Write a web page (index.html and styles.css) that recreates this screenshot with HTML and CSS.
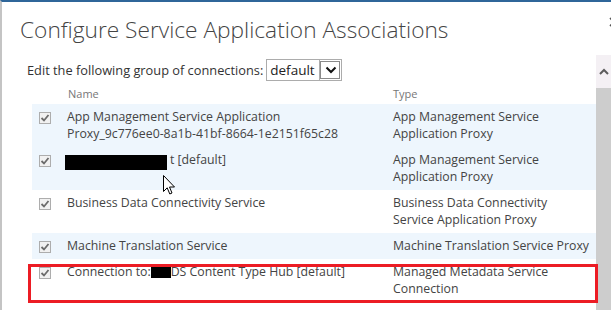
FILE: index.html
```html
<!DOCTYPE html>
<html>
<head>
<meta charset="utf-8">
<link rel="stylesheet" href="styles.css">
</head>
<body>
<div class="window">
  <div class="header">
    <h1 class="title">Configure Service Application Associations</h1>
    <svg class="close" width="10" height="10" viewBox="0 0 10 10"><path d="M1 1 L9 9 M9 1 L1 9" stroke="#555" stroke-width="1.6" fill="none"/></svg>
  </div>
  <div class="body">
    <div class="main">
      <div class="edit">
        <span class="edit-label">Edit the following group of connections:</span>
        <div class="select">
          <span class="select-value">default</span>
          <span class="select-btn"><svg width="12" height="8" viewBox="0 0 12 8"><polyline points="1.5,1.5 6,6 10.5,1.5" fill="none" stroke="#111" stroke-width="2"/></svg></span>
        </div>
      </div>
      <div class="table">
        <div class="thead">
          <span></span><span>Name</span><span>Type</span>
        </div>
        <div class="row hl">
          <span class="cb"><svg width="12" height="12" viewBox="0 0 12 12"><rect x="0.5" y="0.5" width="11" height="11" fill="#f1f1f1" stroke="#adadad"/><polyline points="2.5,6 5,8.5 9.5,3" fill="none" stroke="#6b6b6b" stroke-width="1.8"/></svg></span>
          <span class="name">App Management Service Application<br>Proxy_9c776ee0-8a1b-41bf-8664-1e2151f65c28</span>
          <span class="type">App Management Service<br>Application Proxy</span>
        </div>
        <div class="row hl">
          <span class="cb"><svg width="12" height="12" viewBox="0 0 12 12"><rect x="0.5" y="0.5" width="11" height="11" fill="#f1f1f1" stroke="#adadad"/><polyline points="2.5,6 5,8.5 9.5,3" fill="none" stroke="#6b6b6b" stroke-width="1.8"/></svg></span>
          <span class="name"><span class="redact redact-a"></span>t [default]</span>
          <span class="type">App Management Service<br>Application Proxy</span>
        </div>
        <div class="row">
          <span class="cb"><svg width="12" height="12" viewBox="0 0 12 12"><rect x="0.5" y="0.5" width="11" height="11" fill="#f1f1f1" stroke="#adadad"/><polyline points="2.5,6 5,8.5 9.5,3" fill="none" stroke="#6b6b6b" stroke-width="1.8"/></svg></span>
          <span class="name">Business Data Connectivity Service</span>
          <span class="type">Business Data Connectivity<br>Service Application Proxy</span>
        </div>
        <div class="row hl">
          <span class="cb"><svg width="12" height="12" viewBox="0 0 12 12"><rect x="0.5" y="0.5" width="11" height="11" fill="#f1f1f1" stroke="#adadad"/><polyline points="2.5,6 5,8.5 9.5,3" fill="none" stroke="#6b6b6b" stroke-width="1.8"/></svg></span>
          <span class="name">Machine Translation Service</span>
          <span class="type">Machine Translation Service Proxy</span>
        </div>
        <div class="row marked">
          <span class="cb"><svg width="12" height="12" viewBox="0 0 12 12"><rect x="0.5" y="0.5" width="11" height="11" fill="#f1f1f1" stroke="#adadad"/><polyline points="2.5,6 5,8.5 9.5,3" fill="none" stroke="#6b6b6b" stroke-width="1.8"/></svg></span>
          <span class="name">Connection to:<span class="redact redact-b"></span>DS Content Type Hub [default]</span>
          <span class="type">Managed Metadata Service<br>Connection</span>
          <span class="annot"></span>
        </div>
      </div>
    </div>
    <div class="scrollbar">
      <div class="sb-up"><svg width="10" height="7" viewBox="0 0 10 7"><polyline points="1,6 5,2 9,6" fill="none" stroke="#5c5c5c" stroke-width="2"/></svg></div>
      <div class="sb-thumb"></div>
    </div>
  </div>
  <svg class="cursor" width="13" height="21" viewBox="0 0 13 21"><path d="M0.5 0.5 L0.5 16.5 L4.2 12.8 L6.8 19 L9 18 L6.5 12 L11.5 12 Z" fill="#fff" stroke="#000" stroke-width="1" stroke-linejoin="miter"/></svg>
</div>
</body>
</html>
```

FILE: styles.css
```css
html, body {
  margin: 0;
  padding: 0;
  background: #fff;
}

.window {
  position: relative;
  width: 611px;
  height: 310px;
  box-sizing: border-box;
  overflow: hidden;
  border-top: 2px solid #2f6699;
  border-left: 2px solid #c4c4c4;
  font-family: "Open Sans", "Noto Sans", sans-serif;
  color: #444;
}

.header {
  display: flex;
  align-items: flex-start;
  padding-top: 14px;
  height: 28px;
}

.title {
  margin: 0 0 0 18px;
  font-size: 22.7px;
  line-height: 28px;
  font-weight: 300;
  color: #444;
  white-space: nowrap;
}

.close {
  margin-left: auto;
  margin-right: -8px;
  margin-top: 1px;
}

.body {
  display: flex;
  margin-top: 11px;
  height: 255px;
}

.main {
  flex: 1;
  min-width: 0;
}

.edit {
  display: flex;
  align-items: center;
  padding: 4px 0 0 25px;
  height: 22px;
  font-size: 12.8px;
}

.edit-label {
  margin-right: 3px;
  color: #333;
}

.select {
  display: flex;
  box-sizing: border-box;
  width: 76px;
  height: 22px;
  border: 1px solid #acacac;
  background: #fff;
}

.select-value {
  flex: 1;
  padding-left: 3px;
  font-size: 13.5px;
  line-height: 20px;
  color: #222;
}

.select-btn {
  box-sizing: border-box;
  width: 22px;
  height: 20px;
  border-left: 1px solid #acacac;
  outline: 1px solid #8a8a8a;
  outline-offset: -2px;
  display: flex;
  align-items: center;
  justify-content: center;
}

.table {
  margin-left: 30px;
}

.thead {
  display: grid;
  grid-template-columns: 35px 326px 1fr;
  padding: 6px 0 3px;
  font-size: 11px;
  line-height: 14px;
  color: #777;
}

.thead span:nth-child(2) {
  padding-left: 1px;
}

.row {
  position: relative;
  display: grid;
  grid-template-columns: 35px 326px 1fr;
  padding: 4px 0 5px;
  font-size: 12.3px;
  line-height: 17px;
  color: #444;
}

.row.hl {
  background: #eef6fd;
}

.cb {
  padding-left: 7px;
  padding-top: 4px;
  line-height: 0;
}

.name, .type {
  white-space: nowrap;
}

.redact {
  display: inline-block;
  background: #000;
}

.redact-a {
  width: 102px;
  height: 15px;
  margin-left: -2px;
  margin-right: 3px;
  vertical-align: -6px;
}

.redact-b {
  width: 20px;
  height: 11px;
  vertical-align: -2px;
}

.annot {
  position: absolute;
  left: -4px;
  top: 5px;
  width: 570px;
  height: 39px;
  box-sizing: border-box;
  border: 3px solid #ec1c24;
}

.scrollbar {
  width: 15px;
  display: flex;
  flex-direction: column;
}

.sb-up {
  height: 33px;
  background: #f4f0f4;
  display: flex;
  align-items: center;
  justify-content: center;
  padding-left: 1px;
}

.sb-thumb {
  flex: 1;
  background: #cdcdcd;
}

.cursor {
  position: absolute;
  left: 161px;
  top: 173px;
}
```
